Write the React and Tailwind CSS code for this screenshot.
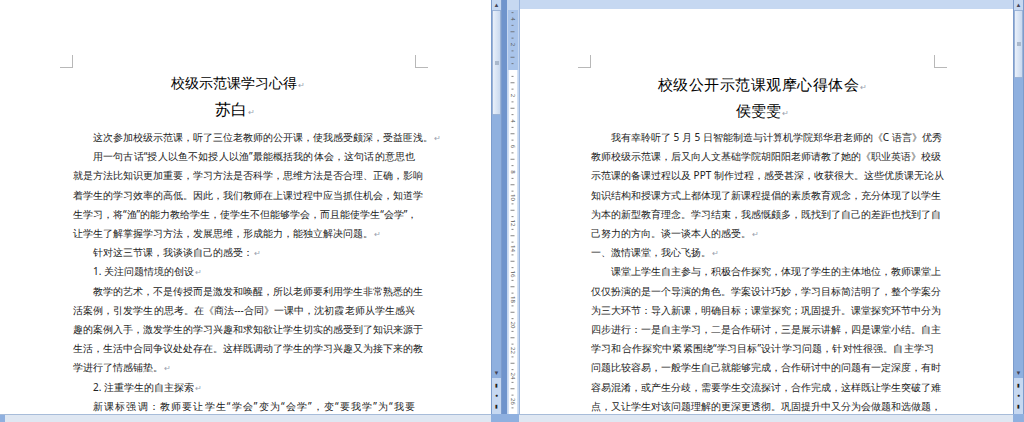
const leftLines = [
  ['这次参加校级示范课，听了三位老教师的公开课，使我感受颇深，受益匪浅。', 'i', 'end'],
  ['用一句古话“授人以鱼不如授人以渔”最能概括我的体会，这句话的意思也', 'i'],
  ['就是方法比知识更加重要，学习方法是否科学，思维方法是否合理、正确，影响'],
  ['着学生的学习效率的高低。因此，我们教师在上课过程中应当抓住机会，知道学'],
  ['生学习，将“渔”的能力教给学生，使学生不但能够学会，而且能使学生“会学”，'],
  ['让学生了解掌握学习方法，发展思维，形成能力，能独立解决问题。', '', 'end'],
  ['针对这三节课，我谈谈自己的感受：', 'i', 'end'],
  ['1. 关注问题情境的创设', 'i', 'end'],
  ['教学的艺术，不是传授而是激发和唤醒，所以老师要利用学生非常熟悉的生', 'i'],
  ['活案例，引发学生的思考。在《商法---合同》一课中，沈初霞老师从学生感兴'],
  ['趣的案例入手，激发学生的学习兴趣和求知欲让学生切实的感受到了知识来源于'],
  ['生活，生活中合同争议处处存在。这样既调动了学生的学习兴趣又为接下来的教'],
  ['学进行了情感铺垫。', '', 'end'],
  ['2. 注重学生的自主探索', 'i', 'end'],
  ['新课标强调：教师要让学生“学会”变为“会学”，变“要我学”为“我要', 'i'],
]

const rightLines = [
  ['我有幸聆听了 5 月 5 日智能制造与计算机学院郑华君老师的《C 语言》优秀', 'i'],
  ['教师校级示范课，后又向人文基础学院胡阳阳老师请教了她的《职业英语》校级'],
  ['示范课的备课过程以及 PPT 制作过程，感受甚深，收获很大。这些优质课无论从'],
  ['知识结构和授课方式上都体现了新课程提倡的素质教育观念，充分体现了以学生'],
  ['为本的新型教育理念。学习结束，我感慨颇多，既找到了自己的差距也找到了自'],
  ['己努力的方向。谈一谈本人的感受。', '', 'end'],
  ['一、激情课堂，我心飞扬。', '', 'end'],
  ['课堂上学生自主参与，积极合作探究，体现了学生的主体地位，教师课堂上', 'i'],
  ['仅仅扮演的是一个导演的角色。学案设计巧妙，学习目标简洁明了，整个学案分'],
  ['为三大环节：导入新课，明确目标；课堂探究；巩固提升。课堂探究环节中分为'],
  ['四步进行：一是自主学习，二是合作研讨，三是展示讲解，四是课堂小结。自主'],
  ['学习和合作探究中紧紧围绕“学习目标”设计学习问题，针对性很强。自主学习'],
  ['问题比较容易，一般学生自己就能够完成，合作研讨中的问题有一定深度，有时'],
  ['容易混淆，或产生分歧，需要学生交流探讨，合作完成，这样既让学生突破了难'],
  ['点，又让学生对该问题理解的更深更透彻。巩固提升中又分为会做题和选做题，'],
]

const Mark = () => <span className="text-[8px] text-gray-400 ml-[1px]">↵</span>

const Body = ({ lines }) => (
  <div className="mt-[3px] text-[10px] leading-[19.2px] text-[#222]">
    {lines.map(([t, ind, end], i) => (
      <div
        key={i}
        className={`whitespace-nowrap ${ind ? 'pl-[20px]' : ''} ${end ? 'text-left' : 'text-justify [text-align-last:justify]'}`}
      >
        {t}
        {end && <Mark />}
      </div>
    ))}
  </div>
)

const Corners = () => (
  <div className="flex justify-between h-[13px]">
    <div className="w-[13px] border-r border-b border-[#b8b8b8]" />
    <div className="w-[13px] border-l border-b border-[#b8b8b8]" />
  </div>
)

const VScroll = ({ thumbEnd }) => (
  <div className="w-[11px] h-full flex flex-col bg-[#8fb0df] border-x border-[#7c9ccc]">
    <div className="h-[10px] bg-[#c6d8f1] flex items-center justify-center text-[6px] text-[#445]">▲</div>
    <div
      className="bg-gradient-to-r from-[#e9f0fa] to-[#c9d9ef] border border-[#9bb3d6] rounded-[1px] flex items-center justify-center"
      style={{ height: thumbEnd - 10 }}
    >
      <div className="w-[4px] h-[4px] bg-[#a9b8cc]" />
    </div>
    <div className="flex-1" />
    <div className="h-[10px] flex items-center justify-center text-[6px] text-[#445]">▼</div>
    <div className="h-[36px] bg-[#c6d8f1] flex flex-col items-center justify-around py-[2px] text-[5px] text-[#222]">
      <span>▮</span>
      <span>●</span>
      <span>▮</span>
    </div>
  </div>
)

const Ruler = () => {
  const unit = 12.75
  const zero = 70
  const marks = []
  for (let h = -10; h <= 56; h++) {
    const y = zero + (h / 2) * unit
    if (y < 12 || y > 412) continue
    if (h % 4 === 0 && h !== 0) {
      marks.push(
        <text key={h} x="5.5" y={y} fontSize="6" fill="#555" textAnchor="middle" dominantBaseline="middle" transform={`rotate(90 5.5 ${y})`}>
          {Math.abs(h / 2)}
        </text>
      )
    } else if (h !== 0) {
      marks.push(<line key={h} x1={h % 2 === 0 ? 3.5 : 4.5} x2={h % 2 === 0 ? 7.5 : 6.5} y1={y} y2={y} stroke="#666" strokeWidth="0.8" />)
    }
  }
  return (
    <svg width="12" height="414" className="block">
      <rect x="0" y="0" width="12" height="414" fill="#c6d8f1" />
      <rect x="1" y="10" width="10" height="404" fill="#a9c4ea" />
      <rect x="1.5" y={zero} width="9" height="344" fill="#fff" />
      {marks}
    </svg>
  )
}

export default function App() {
  return (
    <div className="w-[1024px] h-[422px] flex flex-col bg-[#6f94cc] overflow-hidden font-['Noto_Sans_CJK_SC','Noto_Sans',sans-serif]">
      <div className="flex h-[414px]">
        <div className="w-[491px] h-full bg-white overflow-hidden">
          <div className="ml-[60px] w-[368px] pt-[55px]">
            <Corners />
            <div className="mx-[13px]">
              <div className="mt-[4px] text-center text-[13.5px] leading-[22px] text-black pr-[12px]">校级示范课学习心得<Mark /></div>
              <div className="text-center text-[16px] leading-[26px] text-black pr-[18px]">苏白<Mark /></div>
              <Body lines={leftLines} />
            </div>
          </div>
        </div>
        <VScroll thumbEnd={115} />
        <div className="w-[5px] bg-[#6f94cc]" />
        <Ruler />
        <div className="flex-1 h-full flex flex-col bg-white overflow-hidden border-l border-[#9ab5dd]">
          <div className="h-[9px] bg-[#c6d8f1] shrink-0" />
          <div className="ml-[58px] w-[369px] pt-[46px]">
            <Corners />
            <div className="mx-[13px]">
              <div className="mt-[5px] text-center text-[15px] leading-[22px] tracking-[0.5px] text-black">校级公开示范课观摩心得体会<Mark /></div>
              <div className="text-center text-[15px] leading-[24px] text-black">侯雯雯<Mark /></div>
              <Body lines={rightLines} />
            </div>
          </div>
        </div>
        <VScroll thumbEnd={78} />
      </div>
      <div className="h-[8px] flex">
        <div className="w-[491px] bg-[#dfe7f2] border-t border-[#a7bcd9] flex">
          <div className="w-[5px] bg-[#8fb0df]" />
        </div>
        <div className="w-[28px] bg-[#8fb0df]" />
        <div className="flex-1 bg-[#dfe7f2] border-t border-[#a7bcd9]" />
        <div className="w-[11px] bg-[#8fb0df]" />
      </div>
    </div>
  )
}
